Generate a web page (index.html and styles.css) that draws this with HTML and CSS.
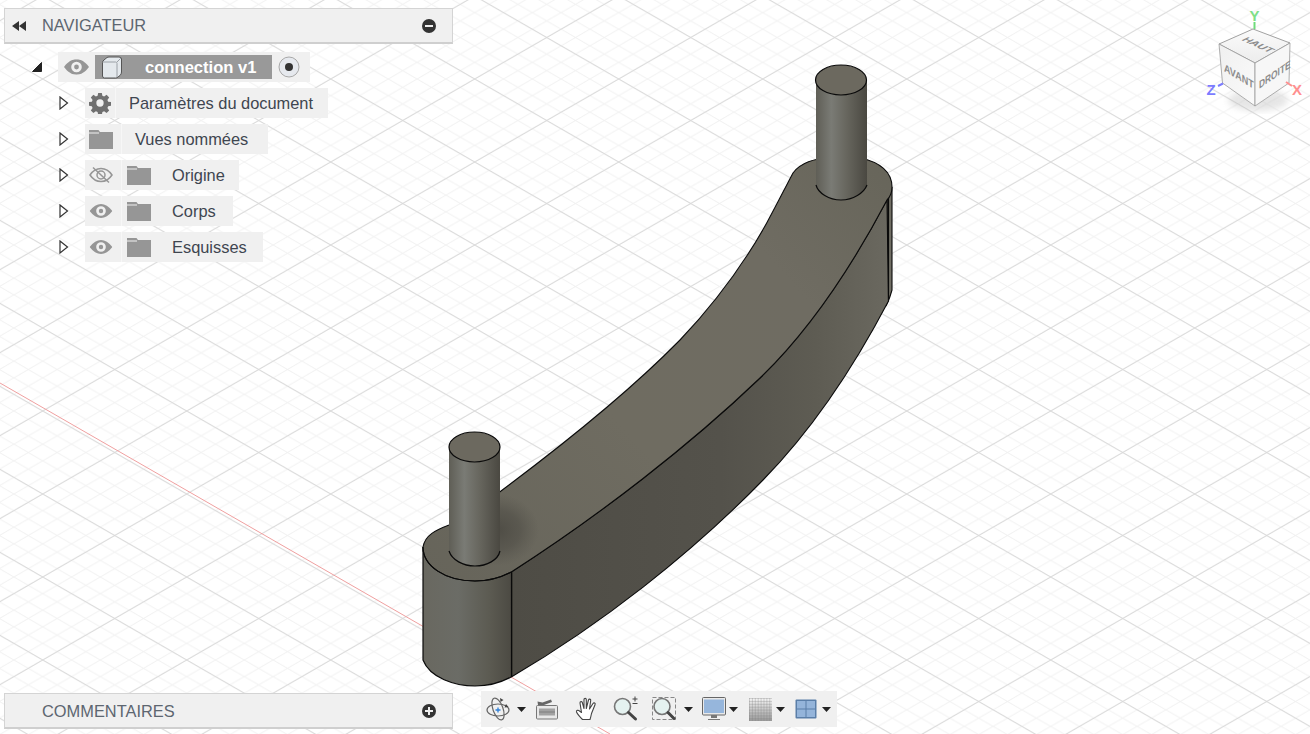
FILE: index.html
```html
<!DOCTYPE html>
<html lang="fr">
<head>
<meta charset="utf-8">
<title>connection v1</title>
<link rel="stylesheet" href="styles.css">
</head>
<body>
<div class="app">
<svg class="scene" width="1310" height="734" viewBox="0 0 1310 734">
  <defs>
    <pattern id="minor" width="28.8" height="16.6" patternUnits="userSpaceOnUse" patternTransform="translate(42.7 79)">
      <path d="M0 0L28.8 16.6M0 16.6L28.8 0" stroke="#f1f1f1" stroke-width="1" fill="none"/>
    </pattern>
    <pattern id="major" width="144" height="83" patternUnits="userSpaceOnUse" patternTransform="translate(42.7 79)">
      <path d="M0 0L144 83M0 83L144 0" stroke="#d8d8d8" stroke-width="1" fill="none"/>
    </pattern>
    <linearGradient id="peg" x1="0" x2="1" y1="0" y2="0">
      <stop offset="0" stop-color="#5f5e56"/><stop offset=".3" stop-color="#7a7b75"/><stop offset=".6" stop-color="#67665e"/><stop offset="1" stop-color="#4a4841"/>
    </linearGradient>
    <linearGradient id="base" x1="0" x2="1" y1="0" y2="0">
      <stop offset="0" stop-color="#696860"/><stop offset=".4" stop-color="#6b6c66"/><stop offset=".75" stop-color="#5c5b52"/><stop offset="1" stop-color="#4c4a43"/>
    </linearGradient>
    <linearGradient id="top" gradientUnits="userSpaceOnUse" x1="423" y1="580" x2="892" y2="160">
      <stop offset="0" stop-color="#66645a"/><stop offset=".4" stop-color="#6f6c61"/><stop offset=".75" stop-color="#6f6c62"/><stop offset="1" stop-color="#67655a"/>
    </linearGradient>
    <linearGradient id="front" gradientUnits="userSpaceOnUse" x1="511" y1="0" x2="892" y2="0">
      <stop offset="0" stop-color="#4e4c45"/><stop offset=".55" stop-color="#54524b"/><stop offset=".8" stop-color="#5e5c53"/><stop offset="1" stop-color="#6b6960"/>
    </linearGradient>
    <radialGradient id="pegshade">
      <stop offset="0" stop-color="#4a4841" stop-opacity=".85"/><stop offset=".55" stop-color="#4e4c45" stop-opacity=".55"/><stop offset="1" stop-color="#55534b" stop-opacity="0"/>
    </radialGradient>
    <linearGradient id="cubeTop" x1="0" x2="0" y1="0" y2="1"><stop offset="0" stop-color="#fbfbfb"/><stop offset="1" stop-color="#ececec"/></linearGradient>
    <linearGradient id="cubeL" x1="0" x2="1" y1="0" y2="1"><stop offset="0" stop-color="#f0f0f0"/><stop offset="1" stop-color="#fafafa"/></linearGradient>
    <filter id="soft"><feGaussianBlur stdDeviation="3"/></filter>
  </defs>
  <rect width="1310" height="734" fill="#ffffff"/>
  <rect width="1310" height="734" fill="url(#minor)"/>
  <rect width="1310" height="734" fill="url(#major)"/>
  <path d="M0 383L610 734" stroke="#f0a0a0" stroke-width="1" fill="none"/>

  <!-- right end strip -->
  <path d="M887 198L892 187V290C890 298 888 302 886 306L888 300Z" fill="#716f65" stroke="#0a0a0a" stroke-width="1.1"/>
  <!-- front curved wall -->
  <path d="M511.700 571.700C600 515 690 445 760 378C810 330 850 270 887 200L888.500 301C855 365 812 430 763 480C690 555 600 625 511.700 676.700Z" fill="url(#front)" stroke="#0a0a0a" stroke-width="1.100"/>
  <path d="M888.500 198V301" stroke="#0a0a0a" stroke-width="1.200"/>

  <!-- left base wall -->
  <path d="M423 547V660C430 678 455 686 475 686C490 686 502 682 511 677V572L475 560Z" fill="url(#base)"/>
  <path d="M423 547V660C430 678 455 686 475 686C490 686 502 682 511 677" fill="none" stroke="#0a0a0a" stroke-width="1.200"/>
  <path d="M511.500 571V677" stroke="#0a0a0a" stroke-width="1.200"/>

  <!-- top curved surface -->
  <path d="M423 547C425 535 436 530 449 525L500 491.700C560 447 625 396 680 340C720 298 745 262 766.700 223C776 206 784 190 793 173C800 163 815 158 830 158H860C880 162 892 172 892 187C892 192 890 197 887 200C850 270 810 330 760 378C690 445 600 515 511.700 571.700C500 578 488 581 475 581C445 581 423 566 423 547Z" fill="url(#top)" stroke="#0a0a0a" stroke-width="1.100"/>
  <ellipse cx="497" cy="530" rx="42" ry="36" fill="url(#pegshade)"/>
  <path d="M423 547C423 566 445 581 475 581C488 581 500 578 511.700 571.700" fill="none" stroke="#0a0a0a" stroke-width="1.100"/>

  <!-- pegs -->
  <path d="M449 447V551C452 560 463 566 475 566C487 566 498 560 500 551V447Z" fill="url(#peg)"/>
  <path d="M449 551C452 560 463 566 475 566C487 566 498 560 500 551" fill="none" stroke="#0a0a0a" stroke-width="1.200"/>
  <ellipse cx="474.500" cy="447" rx="25.500" ry="15" fill="#6c695f" stroke="#0a0a0a" stroke-width="1.200"/>
  <path d="M816 80V185C818 193 829 200 841 200C853 200 864 193 867 185V80Z" fill="url(#peg)"/>
  <path d="M816 185C818 193 829 200 841 200C853 200 864 193 867 185" fill="none" stroke="#0a0a0a" stroke-width="1.200"/>
  <ellipse cx="841" cy="80" rx="25.500" ry="15" fill="#6c695f" stroke="#0a0a0a" stroke-width="1.200"/>

  <!-- view cube -->
  <ellipse cx="1258" cy="100" rx="30" ry="11" fill="#b8b8b8" opacity=".35" filter="url(#soft)"/>
  <path d="M1222 83L1255 106L1289 83L1290 43L1253 29L1219 44Z" fill="#f6f6f6"/>
  <path d="M1253 29L1290 43L1255 63L1219 44Z" fill="url(#cubeTop)" stroke="#8a8a8a" stroke-width=".8"/>
  <path d="M1219 44L1255 63L1255 106L1222.500 83Z" fill="url(#cubeL)" stroke="#9a9a9a" stroke-width=".8"/>
  <path d="M1290 43L1255 63L1255 106L1289 83Z" fill="#f7f7f7" stroke="#9a9a9a" stroke-width=".8"/>
  <text class="cube-label" transform="matrix(.92 .42 -.85 .42 1241 40)">HAUT</text>
  <text class="cube-label" transform="matrix(.82 .5 0 1 1224 71)">AVANT</text>
  <text class="cube-label" transform="matrix(.76 -.52 0 1 1259 89)">DROITE</text>
  <path d="M1254.500 29V22" stroke="#6fdc7a" stroke-width="2"/>
  <path d="M1223 83.500L1218 86" stroke="#7b7bff" stroke-width="2"/>
  <path d="M1286 82L1292 86" stroke="#ff8f8f" stroke-width="2"/>
  <text class="axis axis-y" x="1254.500" y="21" text-anchor="middle">Y</text>
  <text class="axis axis-z" x="1211" y="95" text-anchor="middle">Z</text>
  <text class="axis axis-x" x="1297" y="95" text-anchor="middle">X</text>
</svg>

<svg class="symbols" width="0" height="0">
  <symbol id="eye" viewBox="0 0 26 16"><path fill="#969696" fill-rule="evenodd" d="M0 8C4 2.500 8.500 0 13 0S22 2.500 26 8C22 13.500 17.500 16 13 16S4 13.500 0 8ZM13 2.500A5.500 5.500 0 1 0 13 13.500 5.500 5.500 0 0 0 13 2.500ZM13 5.500A2.500 2.500 0 1 1 13 10.500 2.500 2.500 0 0 1 13 5.500Z"/></symbol>
  <symbol id="folder" viewBox="0 0 24 20"><path d="M0 1H9.500L11 3H24V20H0V4.500H10V3.500H0Z" fill="#969696"/></symbol>
</svg>

<section class="panel panel-nav">
  <svg class="ico-rewind" width="16" height="10" viewBox="0 0 16 10"><path d="M8 0V10L1 5ZM15 0V10L8 5Z" fill="#333"/></svg>
  <span class="panel-title panel-title-n">NAVIGATEUR</span>
  <svg class="ico-round" width="14" height="14" viewBox="0 0 14 14"><circle cx="7" cy="7" r="7" fill="#333"/><rect x="3" y="6" width="8" height="2" fill="#f0f0f0"/></svg>
</section>

<div class="tree">
  <div class="tree-row root-row">
    <svg class="twist" width="12" height="12" viewBox="0 0 12 12"><path d="M1.500 10.500L10.500 1.500V10.500Z" fill="#222" stroke="#222"/></svg>
    <div class="chip chip-root">
      <span class="cell cell-eye-root">
        <svg width="25" height="16" viewBox="0 0 26 16"><use href="#eye"/></svg>
      </span>
      <span class="name-cell">
        <svg class="box-ico" width="22" height="23" viewBox="0 0 22 23"><path d="M1.500 6.500Q1.500 5 3 4L6 1.500Q7 1 8 1H18Q20.500 1 20.500 3V16Q20.500 18 19 19.500L17 21Q16 22 14.500 22H3.500Q1.500 22 1.500 20Z" fill="#e4e9ed" stroke="#555" stroke-width="1"/><path d="M2 6H14.500Q16 6 16 7.500V21" fill="none" stroke="#9aa0a6"/><path d="M16 6L20 2" stroke="#9aa0a6"/></svg>
        <span class="name-text">connection v1</span>
      </span>
      <svg class="radio" width="22" height="22" viewBox="0 0 22 22"><circle cx="11" cy="11" r="10" fill="#e6e9ee" stroke="#a8a8a8"/><circle cx="11" cy="11" r="4" fill="#333"/></svg>
    </div>
  </div>

  <div class="tree-row">
    <svg class="twist twist-child" width="10" height="14" viewBox="0 0 10 14"><path d="M1 1L8.500 7L1 13Z" fill="#fff" stroke="#333" stroke-width="1.200"/></svg>
    <div class="chip">
      <span class="cell cell-gear">
        <svg width="22" height="22" viewBox="0 0 24 24"><path fill="#707070" fill-rule="evenodd" d="M10 1h4l.6 3.200 1.900.8L19.200 3.100l2.800 2.800-1.900 2.700.8 1.900 3.100.5v4l-3.100.6-.8 1.900 1.900 2.700-2.800 2.800-2.700-1.900-1.900.8-.6 3.100h-4l-.6-3.100-1.900-.8-2.700 1.900-2.800-2.800 1.900-2.700-.8-1.900-3.100-.6v-4l3.100-.5.8-1.900-1.900-2.700 2.800-2.800 2.700 1.900 1.900-.8zM12 8a4 4 0 1 0 0 8 4 4 0 0 0 0-8z"/></svg>
      </span>
      <span class="label label-gear">Paramètres du document</span>
    </div>
  </div>

  <div class="tree-row">
    <svg class="twist twist-child" width="10" height="14" viewBox="0 0 10 14"><path d="M1 1L8.500 7L1 13Z" fill="#fff" stroke="#333" stroke-width="1.200"/></svg>
    <div class="chip">
      <span class="cell cell-wide"><svg width="24" height="20" viewBox="0 0 24 20"><use href="#folder"/></svg></span>
      <span class="label label-views">Vues nommées</span>
    </div>
  </div>

  <div class="tree-row">
    <svg class="twist twist-child" width="10" height="14" viewBox="0 0 10 14"><path d="M1 1L8.500 7L1 13Z" fill="#fff" stroke="#333" stroke-width="1.200"/></svg>
    <div class="chip">
      <span class="cell cell-wide">
        <svg width="24" height="18" viewBox="0 0 24 18"><path d="M1 9C4 4.500 8 2.500 12 2.500S20 4.500 23 9C20 13.500 16 15.500 12 15.500S4 13.500 1 9Z" fill="none" stroke="#969696" stroke-width="1.500"/><circle cx="12" cy="9" r="4" fill="none" stroke="#969696" stroke-width="1.500"/><path d="M4 1.500L20 16.500" stroke="#969696" stroke-width="1.500"/></svg>
      </span>
      <span class="folder-cell"><svg width="24" height="20" viewBox="0 0 24 20"><use href="#folder"/></svg></span>
      <span class="label label-item label-origine">Origine</span>
    </div>
  </div>

  <div class="tree-row">
    <svg class="twist twist-child" width="10" height="14" viewBox="0 0 10 14"><path d="M1 1L8.500 7L1 13Z" fill="#fff" stroke="#333" stroke-width="1.200"/></svg>
    <div class="chip">
      <span class="cell cell-wide"><svg width="24" height="14" viewBox="0 0 26 16"><use href="#eye"/></svg></span>
      <span class="folder-cell"><svg width="24" height="20" viewBox="0 0 24 20"><use href="#folder"/></svg></span>
      <span class="label label-item label-corps">Corps</span>
    </div>
  </div>

  <div class="tree-row">
    <svg class="twist twist-child" width="10" height="14" viewBox="0 0 10 14"><path d="M1 1L8.500 7L1 13Z" fill="#fff" stroke="#333" stroke-width="1.200"/></svg>
    <div class="chip">
      <span class="cell cell-wide"><svg width="24" height="14" viewBox="0 0 26 16"><use href="#eye"/></svg></span>
      <span class="folder-cell"><svg width="24" height="20" viewBox="0 0 24 20"><use href="#folder"/></svg></span>
      <span class="label label-item label-esquisses">Esquisses</span>
    </div>
  </div>
</div>

<section class="panel panel-comments">
  <span class="panel-title panel-title-c">COMMENTAIRES</span>
  <svg class="ico-round" width="14" height="14" viewBox="0 0 14 14"><circle cx="7" cy="7" r="7" fill="#333"/><path d="M3 6h3V3h2v3h3v2H8v3H6V8H3z" fill="#f0f0f0"/></svg>
</section>

<nav class="toolbar">
  <svg class="tool t-orbit" width="26" height="26" viewBox="0 0 26 26"><ellipse cx="13" cy="14" rx="11" ry="6" fill="none" stroke="#666" stroke-width="1.200"/><ellipse cx="13" cy="13" rx="5" ry="11.500" fill="none" stroke="#666" stroke-width="1.200" transform="rotate(-20 13 13)"/><path d="M10.500 14h5M13 11.500v5" stroke="#2f7fd6" stroke-width="1.300"/><path d="M15 2l3.500 2-3 2zM21 8l2.500 3-4 .5z" fill="#444"/></svg>
  <svg class="caret" width="9" height="5" viewBox="0 0 9 5"><path d="M0 0H9L4.500 5Z" fill="#222"/></svg>
  <svg class="tool t-film" width="22" height="22" viewBox="0 0 22 22"><path d="M2 7L1.500 3.500l5 1L15 1.500l1 2.500-8 3z" fill="#666"/><rect x="0.500" y="7.500" width="21" height="13.500" rx="1" fill="#e8e8e8" stroke="#777"/><rect x="3" y="10.500" width="16" height="7" fill="#a2a2a2"/><path d="M3 14h16" stroke="#7e7e7e"/></svg>
  <svg class="tool t-hand" width="24" height="24" viewBox="0 0 24 24"><path d="M7.500 22.500C5 20 3 18 1.500 15C1 13.500 3 12.500 4.500 14L6.500 15.500L5 6C4.800 4.500 7 4 7.300 5.500L9 11.500V2.500C9 1 11.300 1 11.300 2.500V11.500L13.500 3C14 1.500 16 2 15.700 3.500L14.500 12L18 6.500C19 5.200 20.800 6.200 20 7.800L16.500 16.500C16 19 15.500 21 15 22.500Z" fill="#fff" stroke="#444" stroke-width="1.100" stroke-linejoin="round"/></svg>
  <svg class="tool t-zoom" width="26" height="26" viewBox="0 0 26 26"><circle cx="9.500" cy="10.500" r="8" fill="#e5f2f0" stroke="#777" stroke-width="1.600"/><path d="M15.500 16.500L22.500 23" stroke="#444" stroke-width="3" stroke-linecap="round"/><path d="M19.500 3h5M22 .5v5M19.500 7.500h5" stroke="#444" stroke-width="1"/></svg>
  <svg class="tool t-window" width="25" height="26" viewBox="0 0 25 26"><rect x=".500" y="1.500" width="23" height="22" fill="none" stroke="#888" stroke-dasharray="4 2"/><circle cx="10" cy="10.500" r="8" fill="#e5f2f0" stroke="#777" stroke-width="1.600"/><path d="M16 16.500L22 22.500" stroke="#444" stroke-width="3" stroke-linecap="round"/></svg>
  <svg class="caret" width="9" height="5" viewBox="0 0 9 5"><path d="M0 0H9L4.500 5Z" fill="#222"/></svg>
  <svg class="tool t-display" width="24" height="24" viewBox="0 0 24 24"><rect x=".500" y=".500" width="23" height="17.500" rx="1" fill="#e9e9e9" stroke="#666"/><rect x="2" y="2.500" width="20" height="13.500" fill="#96b6dc"/><path d="M9 18h6v3H9zM6 22h12v1H6z" fill="#777"/></svg>
  <svg class="caret caret-tight" width="9" height="5" viewBox="0 0 9 5"><path d="M0 0H9L4.500 5Z" fill="#222"/></svg>
  <svg class="tool t-grid" width="23" height="23" viewBox="0 0 23 23"><defs><linearGradient id="gridfade" x1="0" x2="0" y1="0" y2="1"><stop offset="0" stop-color="#f6f6f6"/><stop offset="1" stop-color="#9a9a9a"/></linearGradient><pattern id="gridcell" width="2.900" height="2.900" patternUnits="userSpaceOnUse"><path d="M0 0H2.900M0 0V2.900" stroke="#7a7a7a" stroke-width=".6" fill="none"/></pattern></defs><rect width="23" height="23" fill="url(#gridfade)"/><rect width="23" height="23" fill="url(#gridcell)"/></svg>
  <svg class="caret caret-tight2" width="9" height="5" viewBox="0 0 9 5"><path d="M0 0H9L4.500 5Z" fill="#222"/></svg>
  <svg class="tool t-views" width="22" height="20" viewBox="0 0 22 20"><rect x=".500" y=".500" width="21" height="19" rx="1" fill="#5a7ea8"/><rect x="2" y="2" width="8.500" height="7.500" fill="#94b4da"/><rect x="11.500" y="2" width="8.500" height="7.500" fill="#94b4da"/><rect x="2" y="10.500" width="8.500" height="7.500" fill="#94b4da"/><rect x="11.500" y="10.500" width="8.500" height="7.500" fill="#94b4da"/></svg>
  <svg class="caret caret-tight3" width="9" height="5" viewBox="0 0 9 5"><path d="M0 0H9L4.500 5Z" fill="#222"/></svg>
</nav>
</div>
</body>
</html>
```
FILE: styles.css
```css
html, body {
  margin: 0;
  padding: 0;
  background: #fff;
}
.app {
  position: relative;
  width: 1310px;
  height: 734px;
  overflow: hidden;
  font-family: "Liberation Sans", Arial, sans-serif;
  font-size: 16.4px;
  color: #3f4650;
}
.scene {
  position: absolute;
  left: 0;
  top: 0;
  display: block;
}
.symbols {
  position: absolute;
}
.cube-label {
  font-family: "Liberation Sans", Arial, sans-serif;
  font-size: 11px;
  font-weight: bold;
  fill: #8c8c8c;
}
.axis {
  font-family: "Liberation Sans", Arial, sans-serif;
  font-size: 15px;
  font-weight: bold;
}
.axis-y { fill: #7fe088; }
.axis-z { fill: #7b7bff; }
.axis-x { fill: #ff8f8f; }

.panel {
  position: absolute;
  left: 4px;
  width: 449px;
  height: 36px;
  box-sizing: border-box;
  display: flex;
  align-items: center;
  background: #f0f0f0;
  border: 1px solid #d4d4d4;
  border-bottom: 2px solid #cfcfcf;
  color: #5d6670;
}
.panel-nav { top: 8px; }
.panel-comments { top: 693px; }
.ico-rewind { margin-left: 6px; }
.panel-title { margin-left: 15px; flex: 1; padding-top: 1px; }
.panel-title-n { padding-top: 0; padding-bottom: 1px; }
.panel-title-c { margin-left: 37px; }
.ico-round { margin-right: 16px; }

.tree {
  position: absolute;
  left: 28px;
  top: 52px;
  display: flex;
  flex-direction: column;
  gap: 6px;
}
.tree-row {
  display: flex;
  align-items: center;
  height: 30px;
  position: relative;
  padding-left: 57px;
}
.twist {
  position: absolute;
  left: 3px;
  top: 9px;
}
.twist-child {
  left: 31px;
  top: 8px;
}
.chip {
  display: flex;
  align-items: center;
  height: 30px;
  background: #f0f0f0;
  white-space: nowrap;
}
.root-row { padding-left: 30px; }
.chip-root { width: 252px; }
.cell {
  display: flex;
  align-items: center;
  justify-content: center;
  height: 30px;
  box-sizing: border-box;
}
.cell-eye-root { width: 37px; }
.cell-gear {
  width: 31px;
  border-right: 1px solid #f7f7f7;
}
.cell-wide {
  width: 37px;
  border-right: 1px solid #f7f7f7;
  padding-right: 5px;
}
.folder-cell {
  display: flex;
  align-items: center;
  margin-left: 5px;
}
.name-cell {
  display: flex;
  align-items: center;
  width: 177px;
  height: 24px;
  background: #999;
  padding-left: 6px;
  box-sizing: border-box;
}
.name-text {
  color: #fff;
  font-weight: bold;
  font-size: 16.6px;
  margin-left: 22px;
  padding-top: 1px;
}
.radio { margin-left: 6px; }
.label { padding-top: 1px; }
.label-gear { margin-left: 13px; padding-right: 15px; }
.label-views { margin-left: 13px; padding-right: 20px; }
.label-item { margin-left: 21px; }
.label-origine { padding-right: 14px; }
.label-corps { padding-right: 17px; }
.label-esquisses { padding-right: 16px; }

.toolbar {
  position: absolute;
  left: 481px;
  top: 691px;
  width: 356px;
  height: 36px;
  box-sizing: border-box;
  padding-left: 4px;
  background: #f0f0f0;
  display: flex;
  align-items: center;
}
.tool { display: block; }
.caret { margin-left: 7px; margin-top: 1px; }
.t-orbit + .caret { margin-left: 6px; }
.caret-tight { margin-left: 3px; }
.caret-tight2 { margin-left: 4px; }
.caret-tight3 { margin-left: 5px; }
.t-film { margin-left: 10px; }
.t-hand { margin-left: 17px; }
.t-zoom { margin-left: 14px; }
.t-window { margin-left: 13px; }
.t-display { margin-left: 9px; }
.t-grid { margin-left: 11px; }
.t-views { margin-left: 10px; }
```
